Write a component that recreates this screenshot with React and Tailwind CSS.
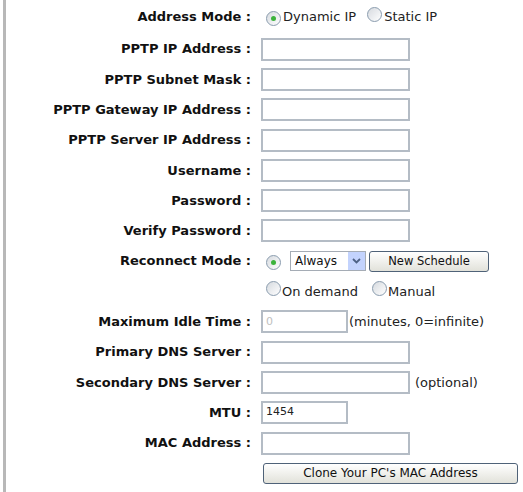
import React from "react";

const font = { fontFamily: '"DejaVu Sans", Verdana, sans-serif' };

function Radio({ checked }) {
  return (
    <span className="inline-flex items-center justify-center w-[15px] h-[15px] rounded-full border border-[#8a9cae] bg-gradient-to-br from-[#d6dadf] to-white shrink-0">
      {checked && <span className="w-[5px] h-[5px] rounded-full bg-[#3cb33c]" />}
    </span>
  );
}

function TextBox({ w = "w-[149px]", value = "", dim = false }) {
  return (
    <div
      className={`${w} h-[23px] border-2 border-[#b4bcc5] bg-white flex items-center px-[3px] text-[11px] ${
        dim ? "text-[#c0c0c0]" : "text-[#222]"
      }`}
    >
      {value}
    </div>
  );
}

function Row({ label, children, h = "h-[30.3px]" }) {
  return (
    <div className={`flex items-center ${h}`}>
      <div className="w-[245px] text-right font-bold text-[13px] text-[#111] whitespace-nowrap">
        {label ? `${label} :` : ""}
      </div>
      <div className="pl-[10px] flex items-center text-[13px] text-[#222] whitespace-nowrap">{children}</div>
    </div>
  );
}

function XpButton({ children, w, text = "text-[12px]" }) {
  return (
    <div
      className={`${w} h-[21px] rounded-[3px] border border-[#4f6278] bg-gradient-to-b from-white to-[#e2e2da] flex items-center justify-center ${text} text-[#111]`}
    >
      {children}
    </div>
  );
}

export default function App() {
  return (
    <div className="min-h-screen bg-white" style={font}>
      <div className="ml-[3px] border-l-[3px] border-[#b8b8b8] min-h-[492px]">
        <Row label="Address Mode" h="h-[34px]">
          <span className="ml-[5px]"><Radio checked /></span>
          <span className="ml-[2px]">Dynamic IP</span>
          <span className="ml-[11px]"><Radio /></span>
          <span className="ml-[2px]">Static IP</span>
        </Row>
        <Row label="PPTP IP Address"><TextBox /></Row>
        <Row label="PPTP Subnet Mask"><TextBox /></Row>
        <Row label="PPTP Gateway IP Address"><TextBox /></Row>
        <Row label="PPTP Server IP Address"><TextBox /></Row>
        <Row label="Username"><TextBox /></Row>
        <Row label="Password"><TextBox /></Row>
        <Row label="Verify Password"><TextBox /></Row>
        <Row label="Reconnect Mode">
          <span className="ml-[5px]"><Radio checked /></span>
          <div className="ml-[9px] w-[76px] h-[20px] border border-[#a5acb5] bg-white flex items-center">
            <span className="flex-1 pl-[4px] text-[12px] text-[#111]">Always</span>
            <span className="w-[17px] h-[18px] bg-[#c3d3fd] flex items-center justify-center">
              <svg width="9" height="6" viewBox="0 0 9 6">
                <path d="M1 1 L4.5 4.5 L8 1" fill="none" stroke="#4d6185" strokeWidth="1.8" />
              </svg>
            </span>
          </div>
          <span className="ml-[3px]"><XpButton w="w-[120px]" text="text-[11.5px]">New Schedule</XpButton></span>
        </Row>
        <Row label="">
          <span className="ml-[5px]"><Radio /></span>
          <span className="ml-[1px]">On demand</span>
          <span className="ml-[14px]"><Radio /></span>
          <span className="ml-[1px]">Manual</span>
        </Row>
        <Row label="Maximum Idle Time">
          <TextBox w="w-[87px]" value="0" dim />
          <span className="ml-[1px]">(minutes, 0=infinite)</span>
        </Row>
        <Row label="Primary DNS Server"><TextBox /></Row>
        <Row label="Secondary DNS Server">
          <TextBox />
          <span className="ml-[5px]">(optional)</span>
        </Row>
        <Row label="MTU"><TextBox w="w-[87px]" value="1454" /></Row>
        <Row label="MAC Address"><TextBox /></Row>
        <Row label="">
          <span className="ml-[2px]"><XpButton w="w-[255px]">Clone Your PC's MAC Address</XpButton></span>
        </Row>
      </div>
    </div>
  );
}
